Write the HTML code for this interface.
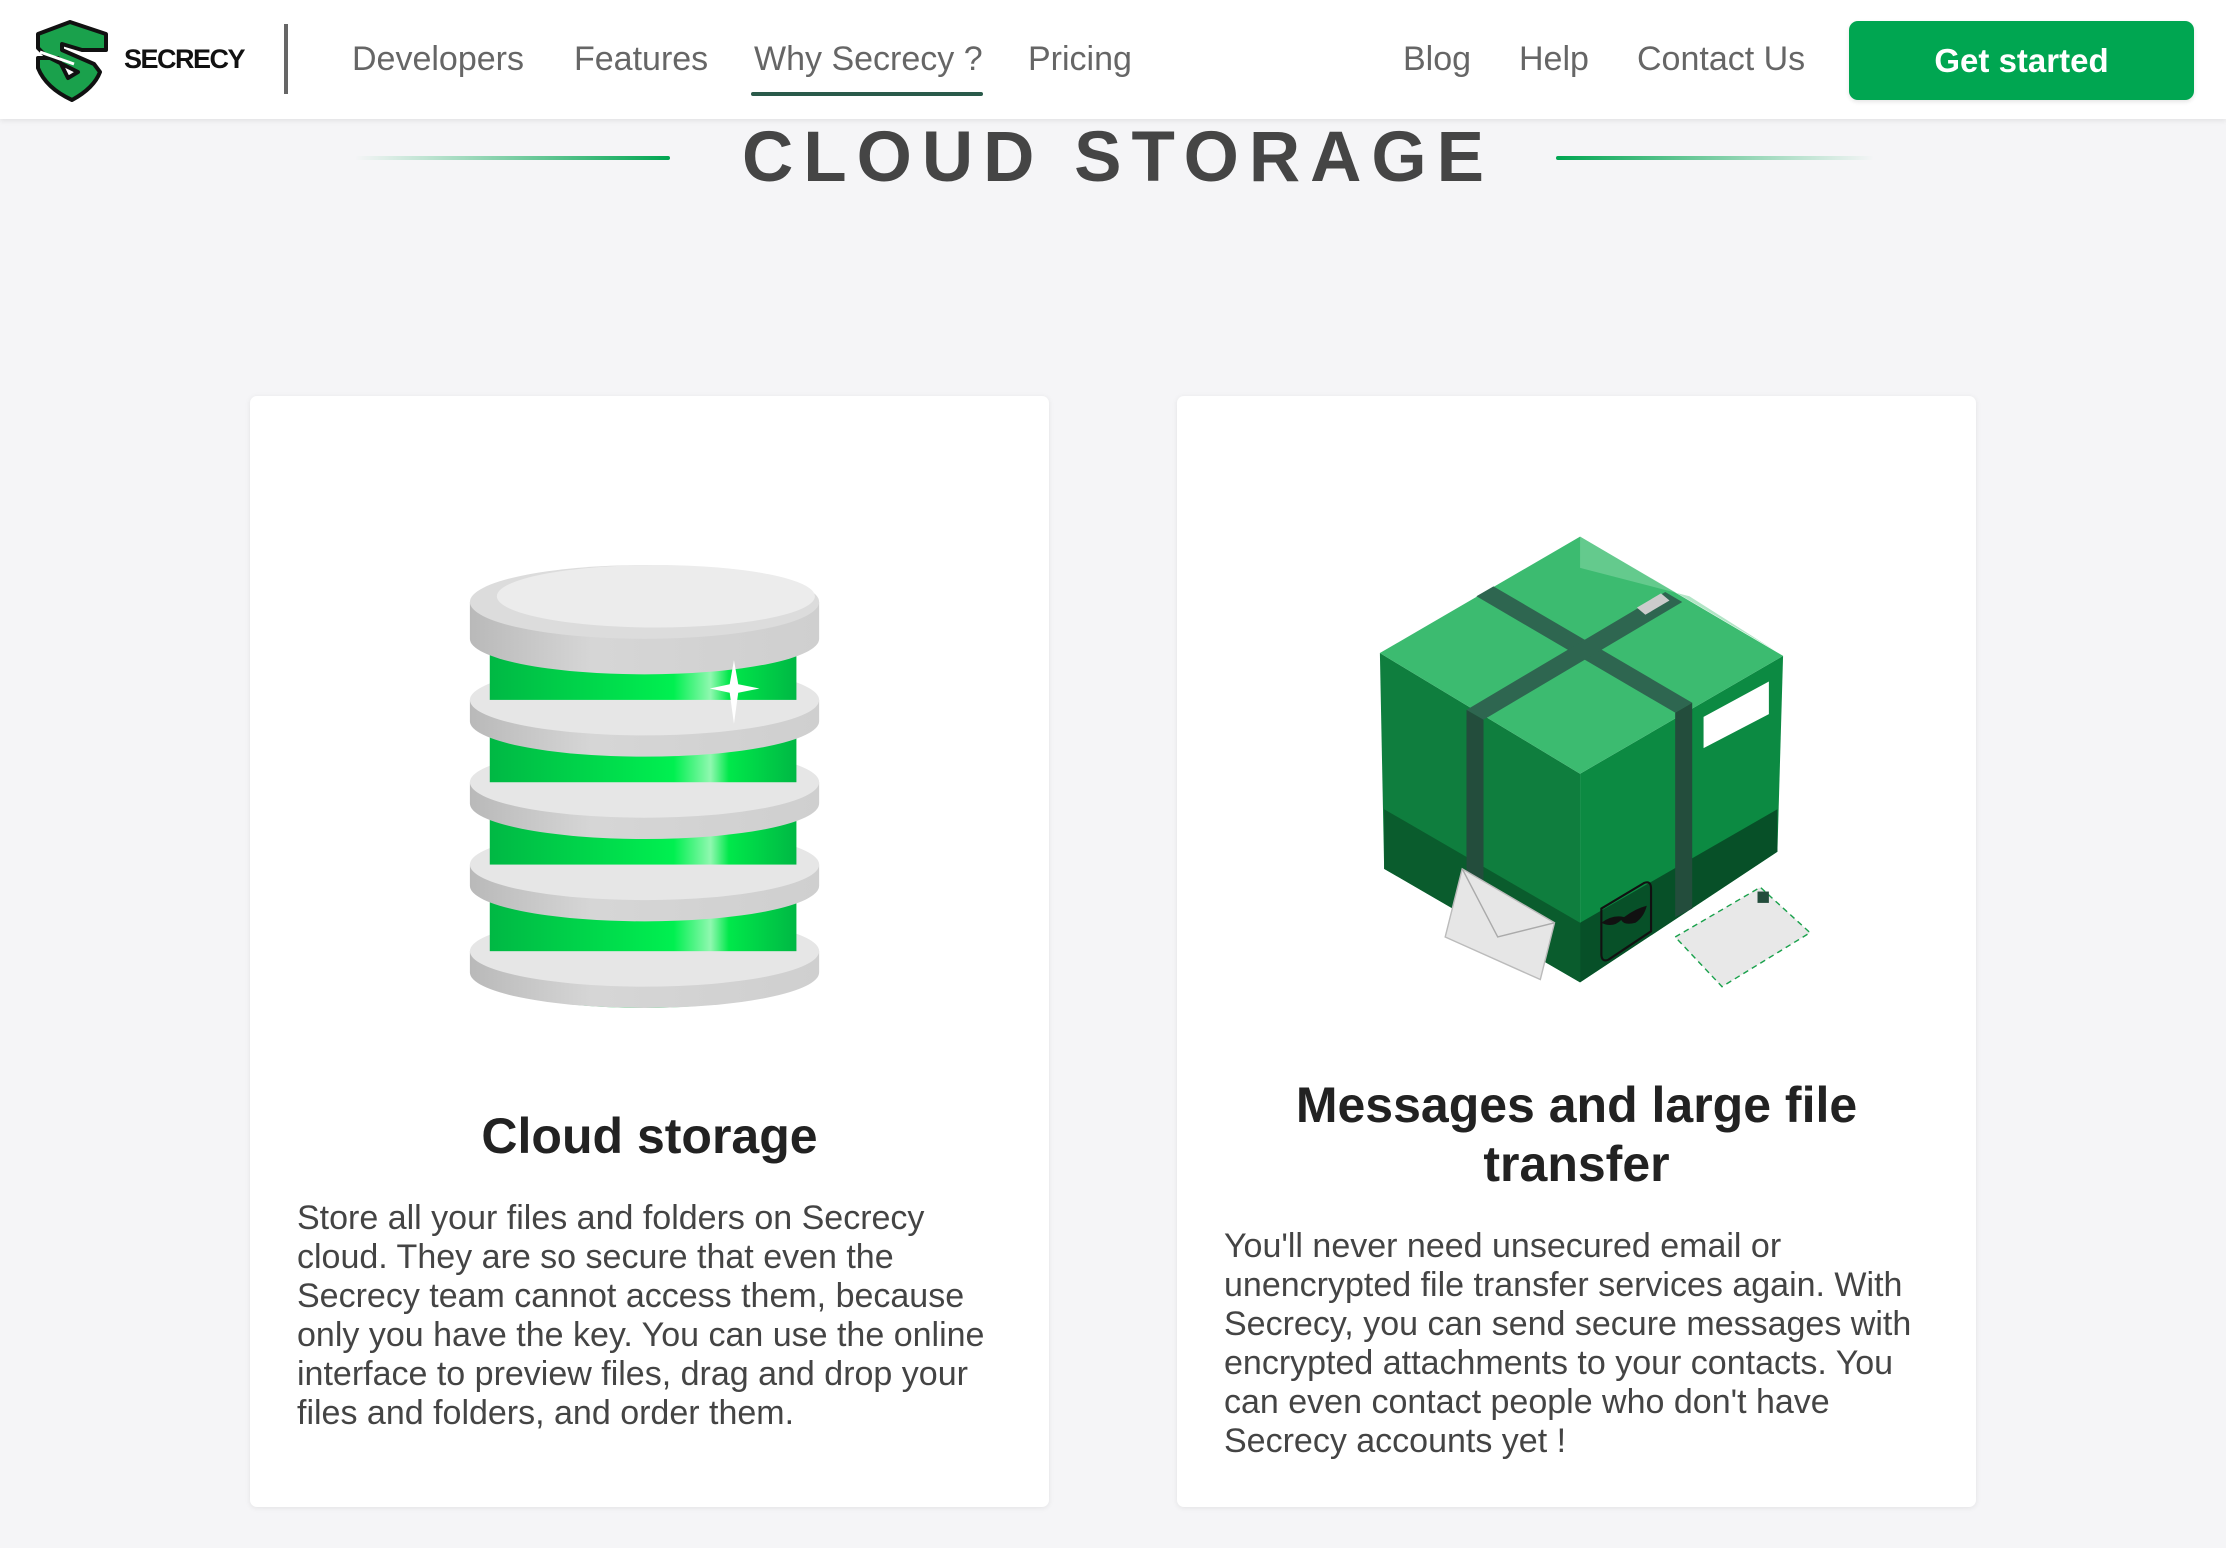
<!DOCTYPE html>
<html><head><meta charset="utf-8"><style>
*{margin:0;padding:0;box-sizing:border-box}
body{width:2226px;height:1548px;background:#f5f5f7;font-family:"Liberation Sans",sans-serif;position:relative;overflow:hidden}
.hdr{position:absolute;left:0;top:0;width:2226px;height:119px;background:#fff;box-shadow:0 2px 5px rgba(0,0,0,.08)}
.nav{position:absolute;top:39px;font-size:34px;color:#666;line-height:40px}
.btn{position:absolute;left:1849px;top:21px;width:345px;height:79px;background:#00a651;border-radius:9px;color:#fff;font-weight:bold;font-size:33px;text-align:center;line-height:79px;box-shadow:0 2px 4px rgba(0,0,0,.1)}
.title{position:absolute;left:0;width:2226px;top:118px;text-align:center;font-size:71px;font-weight:bold;color:#454545;letter-spacing:10px;line-height:80px;padding-left:10px}
.card{position:absolute;top:396px;height:1111px;width:799px;background:#fff;border-radius:7px;box-shadow:0 1px 6px rgba(0,0,0,.08)}
.h{position:absolute;left:0;width:100%;text-align:center;font-weight:bold;font-size:50px;color:#222;line-height:59px}
.p{position:absolute;left:47px;font-size:34px;line-height:39px;color:#444;white-space:nowrap}
</style></head><body>
<div class="hdr">
<svg style="position:absolute;left:34px;top:20px" width="76" height="82" viewBox="0 0 76 82">
<path d="M36 2 L72 14 L72 30 L48 30 L28 24 L28 30 L60 44 L66 52 Q60 68 38 80 Q12 68 4 48 L4 38 L24 38 L34 58 L44 52 L12 36 L4 28 L4 14 Z" fill="#1aa14c" stroke="#111" stroke-width="4" stroke-linejoin="round"/>
<path d="M6 32 L40 44" stroke="#fff" stroke-width="3"/>
</svg>
<div style="position:absolute;left:124px;top:44px;font-size:27px;font-weight:bold;color:#111;letter-spacing:-1.5px">SECRECY</div>
<div style="position:absolute;left:284px;top:24px;width:4px;height:70px;background:#666"></div>
<div class="nav" style="left:352px">Developers</div>
<div class="nav" style="left:574px">Features</div>
<div class="nav" style="left:754px">Why Secrecy ?</div>
<div style="position:absolute;left:751px;top:92px;width:232px;height:4px;background:#2a5a4a;border-radius:2px"></div>
<div class="nav" style="left:1028px">Pricing</div>
<div class="nav" style="left:1403px">Blog</div>
<div class="nav" style="left:1519px">Help</div>
<div class="nav" style="left:1637px">Contact Us</div>
<div class="btn">Get started</div>
</div>
<div style="position:absolute;left:355px;top:156px;width:315px;height:4px;background:linear-gradient(90deg,rgba(0,166,81,0),#00a651);border-radius:2px"></div>
<div style="position:absolute;left:1556px;top:156px;width:318px;height:4px;background:linear-gradient(90deg,#00a651,rgba(0,166,81,0));border-radius:2px"></div>
<div class="title">CLOUD STORAGE</div>

<div class="card" style="left:250px">
<div class="h" style="top:711px">Cloud storage</div>
<div class="p" style="top:803px">Store all your files and folders on Secrecy<br>cloud. They are so secure that even the<br>Secrecy team cannot access them, because<br>only you have the key. You can use the online<br>interface to preview files, drag and drop your<br>files and folders, and order them.</div>
</div>
<div class="card" style="left:1177px">
<div class="h" style="top:680px">Messages and large file<br>transfer</div>
<div class="p" style="top:831px">You'll never need unsecured email or<br>unencrypted file transfer services again. With<br>Secrecy, you can send secure messages with<br>encrypted attachments to your contacts. You<br>can even contact people who don't have<br>Secrecy accounts yet !</div>
</div>

<svg style="position:absolute;left:0;top:0" width="2226" height="1548" viewBox="0 0 1568 1090.4">
<defs>
<linearGradient id="gs" x1="0" x2="1"><stop offset="0" stop-color="#b9b9b9"/><stop offset=".35" stop-color="#d6d6d6"/><stop offset="1" stop-color="#cfcfcf"/></linearGradient>
<linearGradient id="gg" x1="0" x2="1"><stop offset="0" stop-color="#00b844"/><stop offset=".6" stop-color="#00f050"/><stop offset=".72" stop-color="#90f8b0"/><stop offset=".78" stop-color="#00e84a"/><stop offset="1" stop-color="#00b844"/></linearGradient>
</defs>
<g>
<path d="M345 670 L345 688 A108 22 0 0 0 561 688 L561 670 Z" fill="url(#gg)"/>
<path d="M331 670 L331 685 A123 25 0 0 0 577 685 L577 670 Z" fill="url(#gs)"/>
<ellipse cx="454" cy="670" rx="123" ry="25" fill="#e6e6e6"/>
<rect x="345" y="609" width="216" height="61" fill="url(#gg)"/>
<path d="M331 609 L331 624 A123 25 0 0 0 577 624 L577 609 Z" fill="url(#gs)"/>
<ellipse cx="454" cy="609" rx="123" ry="25" fill="#e6e6e6"/>
<rect x="345" y="551" width="216" height="58" fill="url(#gg)"/>
<path d="M331 551 L331 566 A123 25 0 0 0 577 566 L577 551 Z" fill="url(#gs)"/>
<ellipse cx="454" cy="551" rx="123" ry="25" fill="#e6e6e6"/>
<rect x="345" y="493" width="216" height="58" fill="url(#gg)"/>
<path d="M331 493 L331 508 A123 25 0 0 0 577 508 L577 493 Z" fill="url(#gs)"/>
<ellipse cx="454" cy="493" rx="123" ry="25" fill="#e6e6e6"/>
<rect x="345" y="424" width="216" height="69" fill="url(#gg)"/>
<path d="M331 424 L331 450 A123 25 0 0 0 577 450 L577 424 Z" fill="url(#gs)"/>
<ellipse cx="454" cy="424" rx="123" ry="26" fill="#dcdcdc"/>
<ellipse cx="462" cy="420" rx="112" ry="22" fill="#ececec"/>
<path d="M517 465 L520 482 L535 485 L520 488 L517 510 L514 488 L500 485 L514 482 Z" fill="#fff"/>
</g>
<g>
<polygon points="972,460 1113,545 1113,692 975,612" fill="#0f7e3e"/>
<polygon points="975,570 1113,650 1113,692 975,612" fill="#0a5c2d"/>
<polygon points="1113,545 1256,462 1252,600 1113,692" fill="#0c8a42"/>
<polygon points="1113,650 1252,570 1252,600 1113,692" fill="#075028"/>
<polygon points="1113,378 1256,462 1113,545 972,460" fill="#3cbb70"/>
<polygon points="1113,378 1250,458 1190,420 1113,400" fill="#7fd3a0" opacity=".6"/>
<polygon points="1040,420 1052,413 1192,495 1180,502" fill="#2e6650"/>
<polygon points="1033,500 1045,507 1185,424 1173,417" fill="#2e6650"/>
<polygon points="1153,428 1170,418 1176,423 1159,433" fill="#ccc"/>
<polygon points="1033,500 1045,507 1045,640 1033,633" fill="#234d3c"/>
<polygon points="1180,502 1192,495 1192,640 1180,646" fill="#234d3c"/>
<polygon points="1200,505 1246,480 1246,503 1200,527" fill="#fff"/>
<path d="M1128 640 L1158 622 Q1163 620 1163 626 L1163 656 L1133 676 Q1128 678 1128 672 Z" fill="none" stroke="#111" stroke-width="1.5"/>
<path d="M1128 650 q8 -6 16 -4 q8 -6 16 -8 q-2 8 -8 12 q-8 2 -10 -2 q-6 6 -14 2Z" fill="#111"/>
<polygon points="1030,612 1095,650 1085,690 1018,660" fill="#e6e6e6" stroke="#bbb"/>
<path d="M1030 612 L1055 660 L1095 650" fill="none" stroke="#aaa"/>
<polygon points="1180,660 1240,625 1275,657 1213,695" fill="#e8e8e8" stroke="#1aa14c" stroke-dasharray="4 3"/>
<rect x="1238" y="628" width="8" height="8" fill="#234d3c"/>
</g>
</svg>
</body></html>
